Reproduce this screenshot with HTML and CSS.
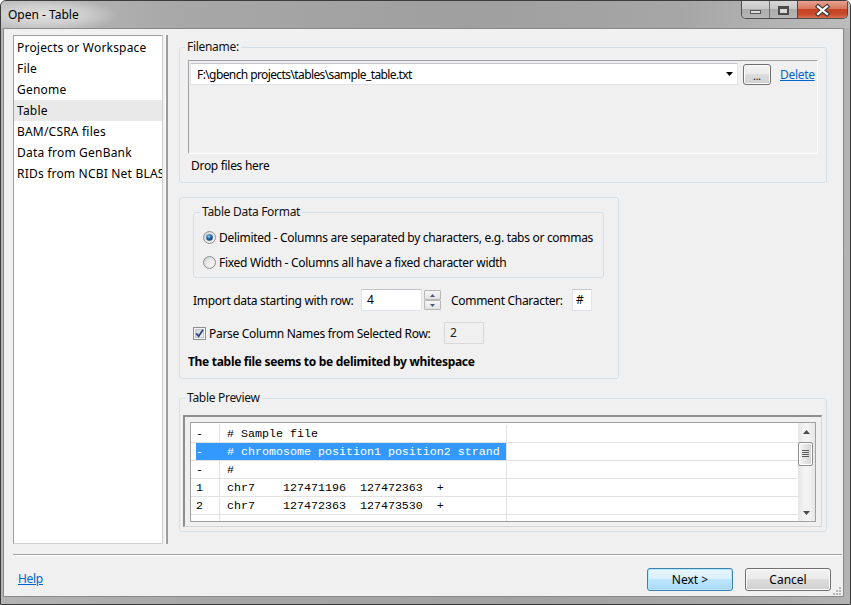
FILE: index.html
```html
<!DOCTYPE html>
<html>
<head>
<meta charset="utf-8">
<title>Open - Table</title>
<link rel="stylesheet" href="styles.css">
</head>
<body>
<div class="window">
  <div class="titlebar">
    <span class="title">Open - Table</span>
    <div class="caption">
      <div class="cap-btn cap-min">
        <svg width="27" height="19" viewBox="0 0 27 19"><rect x="8.5" y="10.5" width="10" height="3" fill="#dcdcdc" stroke="#555"/></svg>
      </div>
      <div class="cap-btn cap-max">
        <svg width="27" height="19" viewBox="0 0 27 19"><rect x="8" y="6" width="11" height="9" fill="#4a4a4a"/><rect x="10" y="9" width="7" height="4" fill="#d8d8d8"/></svg>
      </div>
      <div class="cap-btn cap-close">
        <svg width="49" height="19" viewBox="0 0 49 19"><path d="M20 6.5 L29 14 M29 6.5 L20 14" stroke="#3a3a3a" stroke-width="4.4" stroke-linecap="square" fill="none"/><path d="M20 6.5 L29 14 M29 6.5 L20 14" stroke="#fff" stroke-width="2.2" stroke-linecap="square" fill="none"/></svg>
      </div>
    </div>
  </div>
  <div class="client">
    <div class="main">
      <ul class="sources">
        <li>Projects or Workspace</li>
        <li>File</li>
        <li>Genome</li>
        <li class="selected">Table</li>
        <li>BAM/CSRA files</li>
        <li>Data from GenBank</li>
        <li>RIDs from NCBI Net BLAST</li>
      </ul>
      <div class="splitter"></div>
      <div class="content">
        <fieldset class="group group-file">
          <legend>Filename:</legend>
          <div class="drop-panel">
            <div class="file-row">
              <div class="combo">
                <span class="combo-text">F:\gbench projects\tables\sample_table.txt</span>
                <svg class="combo-arrow" width="7" height="4" viewBox="0 0 7 4"><polygon points="0,0 7,0 3.5,4" fill="#000"/></svg>
              </div>
              <button class="btn btn-browse">...</button>
              <a class="link delete-link" href="#">Delete</a>
            </div>
          </div>
          <div class="drop-hint">Drop files here</div>
        </fieldset>

        <fieldset class="group group-options">
          <fieldset class="group group-format">
            <legend>Table Data Format</legend>
            <label class="radio-row">
              <svg width="13" height="13" viewBox="0 0 13 13">
                <defs>
                  <linearGradient id="rg1" x1="0" y1="0" x2="1" y2="1"><stop offset="0" stop-color="#cfcfcf"/><stop offset="1" stop-color="#fdfdfd"/></linearGradient>
                  <radialGradient id="rd1" cx="0.4" cy="0.35" r="0.75"><stop offset="0" stop-color="#a9d8f8"/><stop offset="0.4" stop-color="#2a6fb8"/><stop offset="1" stop-color="#0c2c57"/></radialGradient>
                </defs>
                <circle cx="6.5" cy="6.5" r="6" fill="url(#rg1)" stroke="#8e8f8f"/>
                <circle cx="6.5" cy="6.5" r="3.3" fill="url(#rd1)"/>
              </svg>
              <span>Delimited - Columns are separated by characters, e.g. tabs or commas</span>
            </label>
            <label class="radio-row second">
              <svg width="13" height="13" viewBox="0 0 13 13">
                <defs>
                  <linearGradient id="rg2" x1="0" y1="0" x2="1" y2="1"><stop offset="0" stop-color="#cfcfcf"/><stop offset="1" stop-color="#fdfdfd"/></linearGradient>
                  <linearGradient id="rg3" x1="0" y1="0" x2="1" y2="1"><stop offset="0" stop-color="#e2e2e2"/><stop offset="1" stop-color="#f8f8f8"/></linearGradient>
                </defs>
                <circle cx="6.5" cy="6.5" r="6" fill="url(#rg2)" stroke="#8e8f8f"/>
                <circle cx="6.5" cy="6.5" r="3.6" fill="url(#rg3)"/>
              </svg>
              <span>Fixed Width - Columns all have a fixed character width</span>
            </label>
          </fieldset>

          <div class="field-row">
            <span class="field-label import-label">Import data starting with row:</span>
            <div class="textbox spin-box">4</div>
            <div class="spin">
              <div class="spin-btn"><svg width="5" height="3" viewBox="0 0 5 3"><polygon points="0,3 2.5,0 5,3" fill="#4b5a7a"/></svg></div>
              <div class="spin-btn"><svg width="5" height="3" viewBox="0 0 5 3"><polygon points="0,0 5,0 2.5,3" fill="#4b5a7a"/></svg></div>
            </div>
            <span class="field-label comment-label">Comment Character:</span>
            <div class="textbox char-box">#</div>
          </div>

          <div class="field-row">
            <label class="check-label">
              <svg width="13" height="13" viewBox="0 0 13 13">
                <defs>
                  <linearGradient id="cb1" x1="0" y1="0" x2="1" y2="1"><stop offset="0" stop-color="#cdd4df"/><stop offset="1" stop-color="#f6f8fa"/></linearGradient>
                </defs>
                <rect x="0.5" y="0.5" width="12" height="12" fill="#f4f4f4" stroke="#8e8f8f"/>
                <rect x="2.5" y="2.5" width="8" height="8" fill="url(#cb1)" stroke="#c2c7cf"/>
                <path d="M3.2 6.4 L5.6 9.2 L10 2.8" stroke="#2e4585" stroke-width="1.8" fill="none"/>
              </svg>
              <span>Parse Column Names from Selected Row:</span>
            </label>
            <div class="textbox disabled-box">2</div>
          </div>

          <div class="detect-msg">The table file seems to be delimited by whitespace</div>
        </fieldset>

        <fieldset class="group group-preview">
          <legend>Table Preview</legend>
          <div class="preview-frame">
            <div class="preview-list">
              <div class="grid">
                <div class="row"><div class="cell c1">-</div><div class="cell c2"># Sample file</div><div class="cell c3"></div></div>
                <div class="row selected"><div class="cell c1">-</div><div class="cell c2"># chromosome position1 position2 strand</div><div class="cell c3"></div></div>
                <div class="row"><div class="cell c1">-</div><div class="cell c2">#</div><div class="cell c3"></div></div>
                <div class="row"><div class="cell c1">1</div><div class="cell c2">chr7    127471196  127472363  +</div><div class="cell c3"></div></div>
                <div class="row"><div class="cell c1">2</div><div class="cell c2">chr7    127472363  127473530  +</div><div class="cell c3"></div></div>
                <div class="row"><div class="cell c1"></div><div class="cell c2"></div><div class="cell c3"></div></div>
              </div>
              <div class="vscroll">
                <div class="sb-btn"><svg width="7" height="4" viewBox="0 0 7 4"><polygon points="0,4 3.5,0 7,4" fill="#4a4a4a"/></svg></div>
                <div class="sb-track">
                  <div class="sb-thumb">
                    <svg width="7" height="8" viewBox="0 0 7 8"><rect x="0" y="0" width="7" height="1" fill="#5a5a5a"/><rect x="0" y="2" width="7" height="1" fill="#5a5a5a"/><rect x="0" y="4" width="7" height="1" fill="#5a5a5a"/><rect x="0" y="6" width="7" height="1" fill="#5a5a5a"/></svg>
                  </div>
                </div>
                <div class="sb-btn"><svg width="7" height="4" viewBox="0 0 7 4"><polygon points="0,0 7,0 3.5,4" fill="#4a4a4a"/></svg></div>
              </div>
            </div>
          </div>
        </fieldset>
      </div>
    </div>
    <div class="separator"></div>
    <div class="footer">
      <a class="link help-link" href="#">Help</a>
      <div class="buttons">
        <button class="btn btn-default">Next &gt;</button>
        <button class="btn">Cancel</button>
      </div>
    </div>
    <svg class="grip" width="8" height="8" viewBox="0 0 8 8">
      <rect x="6" y="0" width="2" height="2" fill="#b5b5b5"/>
      <rect x="3" y="3" width="2" height="2" fill="#b5b5b5"/>
      <rect x="6" y="3" width="2" height="2" fill="#b5b5b5"/>
      <rect x="0" y="6" width="2" height="2" fill="#b5b5b5"/>
      <rect x="3" y="6" width="2" height="2" fill="#b5b5b5"/>
      <rect x="6" y="6" width="2" height="2" fill="#b5b5b5"/>
    </svg>
  </div>
</div>
</body>
</html>
```

FILE: styles.css
```css
* {
  box-sizing: border-box;
}

html, body {
  margin: 0;
  padding: 0;
}

body {
  width: 851px;
  height: 605px;
  overflow: hidden;
  background: #ffffff;
  font-family: "Noto Sans", "Open Sans", sans-serif;
  font-size: 12px;
  letter-spacing: -0.3px;
  color: #000;
}

/* ---------- window frame ---------- */
.window {
  width: 851px;
  height: 605px;
  border: 1px solid #3c3c3c;
  border-radius: 6px 6px 0 0;
  background: linear-gradient(to right, #b4b4b4 0%, #a6a6a6 25%, #a1a1a1 60%, #a9a9a9 90%, #b4b4b4 100%);
  display: flex;
  flex-direction: column;
  overflow: hidden;
}

.titlebar {
  height: 27px;
  flex: none;
  display: flex;
  justify-content: space-between;
  align-items: flex-start;
  background:
    radial-gradient(ellipse 75px 17px at 44px 14px, rgba(226,226,226,0.95) 0%, rgba(226,226,226,0.55) 55%, rgba(226,226,226,0) 100%),
    linear-gradient(to right, #bababa 0%, #a7a7a7 22%, #9f9f9f 55%, #a6a6a6 80%, #bcbcbc 100%);
}

.title {
  padding-left: 7px;
  line-height: 28px;
  font-size: 12px;
  letter-spacing: 0;
  color: #000;
}

.caption {
  display: flex;
  height: 19px;
  margin-right: 2px;
  margin-top: -1px;
  border: 1px solid #4e4e4e;
  border-top: none;
  border-radius: 0 0 5px 5px;
  overflow: hidden;
}

.cap-btn {
  height: 19px;
  display: flex;
  align-items: center;
  justify-content: center;
}

.cap-btn svg {
  display: block;
}

.cap-min,
.cap-max {
  width: 27px;
  background: linear-gradient(#d8d8d8 0%, #c8c8c8 45%, #acacac 50%, #b8b8b8 100%);
}

.cap-max {
  width: 28px;
  border-left: 1px solid #6e6e6e;
}

.cap-close {
  width: 50px;
  border-left: 1px solid #6e3a30;
  background: linear-gradient(#e9a797 0%, #d9765f 45%, #c64424 50%, #c94a2b 75%, #dc7c5c 100%);
}

/* ---------- client area ---------- */
.client {
  flex: 1;
  margin: 0 6px 7px 2px;
  border: 1px solid #8a8a8a;
  background: #f0f0f0;
  display: flex;
  flex-direction: column;
  position: relative;
}

.main {
  height: 515px;
  flex: none;
  display: flex;
  padding: 6px 16px 0 9px;
}

.sources {
  width: 150px;
  height: 509px;
  flex: none;
  margin: 0;
  padding: 1px 0 0 0;
  list-style: none;
  background: #fff;
  border: 1px solid #a0a0a0;
  border-right-color: #d0d0d0;
  border-bottom-color: #d0d0d0;
  overflow: hidden;
  letter-spacing: 0.2px;
}

.sources li {
  height: 21px;
  line-height: 22px;
  padding-left: 3px;
  white-space: nowrap;
  overflow: hidden;
}

.sources li.selected {
  background: #e9e9e9;
}

.splitter {
  width: 3px;
  height: 509px;
  margin-left: 2px;
  flex: none;
  border-left: 1px solid #fff;
  border-right: 2px solid #9c9c9c;
}

.content {
  flex: 1;
  margin-left: 11px;
  padding-top: 4px;
  display: flex;
  flex-direction: column;
  align-items: stretch;
}

/* ---------- group boxes ---------- */
.group {
  margin: 0;
  min-width: 0;
  border: 1px solid #d5dfe5;
  border-radius: 3px;
}

.group > legend {
  padding: 0 2px;
  margin-left: -3px;
  line-height: 16px;
  color: #111;
}

.group-file {
  padding: 5px 8px 8px 8px;
}

.drop-panel {
  height: 94px;
  border-top: 1px solid #a0a0a0;
  border-left: 1px solid #a0a0a0;
  border-right: 1px solid #fff;
  border-bottom: 1px solid #fff;
  padding: 2px 0 0 1px;
}

.file-row {
  display: flex;
  align-items: center;
  height: 22px;
}

.combo {
  width: 548px;
  height: 22px;
  background: #fff;
  border: 1px solid #e2e3ea;
  border-top-color: #c4c6cc;
  display: flex;
  align-items: center;
  justify-content: space-between;
  padding: 0 4px 0 6px;
}

.combo-text {
  letter-spacing: -0.6px;
}

.combo-arrow {
  display: block;
}

.btn {
  font: inherit;
  color: #000;
  padding: 0;
  height: 23px;
  border: 1px solid #707070;
  border-radius: 3px;
  background: linear-gradient(#f2f2f2 0%, #ebebeb 45%, #dddddd 50%, #cfcfcf 100%);
  box-shadow: inset 0 0 0 1px #fbfbfb;
}

.btn-browse {
  width: 28px;
  height: 21px;
  margin-left: 5px;
  margin-top: 1px;
  font-size: 10px;
  line-height: 14px;
  padding-top: 2px;
}

.link {
  color: #0066cc;
  text-decoration: underline;
}

.delete-link {
  margin-left: 9px;
}

.drop-hint {
  margin-top: 4px;
  padding-left: 3px;
  line-height: 16px;
}

.group-options {
  width: 440px;
  margin-top: 14px;
  padding: 6px 13px 8px 13px;
}

.group-format {
  width: 411px;
  padding: 7px 8px 5px 9px;
}

.radio-row {
  display: flex;
  align-items: center;
  gap: 3px;
  height: 20px;
  white-space: nowrap;
}

.radio-row svg,
.check-label svg {
  display: block;
  flex: none;
}

.radio-row.second {
  margin-top: 5px;
}

.field-row {
  display: flex;
  align-items: center;
  height: 22px;
  margin-top: 11px;
}

.field-label {
  flex: none;
  white-space: nowrap;
}

.import-label {
  width: 168px;
}

.comment-label {
  width: 121px;
  margin-left: 10px;
}

.textbox {
  height: 22px;
  line-height: 20px;
  background: #fff;
  border: 1px solid #e2e3ea;
  border-top-color: #c4c6cc;
  flex: none;
}

.spin-box {
  width: 61px;
  padding-left: 5px;
}

.spin {
  width: 17px;
  height: 22px;
  margin-left: 2px;
  display: flex;
  flex-direction: column;
  justify-content: space-between;
  padding: 1px 0;
}

.spin-btn {
  height: 10px;
  border: 1px solid #b8b8b8;
  border-radius: 1px;
  background: linear-gradient(#f6f6f6, #e2e2e2);
  display: flex;
  align-items: center;
  justify-content: center;
}

.spin-btn svg {
  display: block;
}

.char-box {
  width: 20px;
  padding-left: 3px;
}

.check-label {
  width: 251px;
  display: flex;
  align-items: center;
  gap: 3px;
  white-space: nowrap;
}

.disabled-box {
  width: 40px;
  padding-left: 5px;
  background: #f0f0f0;
  border: 1px solid #d9d9d9;
  color: #222;
}

.detect-msg {
  font-weight: bold;
  margin: 10px 0 0 -5px;
  line-height: 16px;
  white-space: nowrap;
}

.group-preview {
  margin-top: 11px;
  padding: 9px 4px 4px 3px;
}

.group-preview > legend {
  margin-left: 2px;
}

.preview-frame {
  height: 112px;
  border-top: 2px solid #8e8e8e;
  border-left: 2px solid #8e8e8e;
  border-right: 1px solid #d6d6d6;
  border-bottom: 1px solid #d6d6d6;
  padding: 5px 5px 4px 5px;
}

.preview-list {
  height: 100px;
  border: 1px solid #a0a0a0;
  background: #fff;
  display: flex;
  overflow: hidden;
}

.grid {
  flex: 1;
  padding-top: 2px;
  overflow: hidden;
  font-family: "Liberation Mono", "Courier New", monospace;
  font-size: 11.67px;
  letter-spacing: 0;
}

.row {
  display: grid;
  grid-template-columns: 29px 287px 1fr;
  height: 18px;
  border-bottom: 1px solid #e2e2e2;
}

.cell {
  line-height: 19px;
  white-space: pre;
  overflow: hidden;
  border-right: 1px solid #e2e2e2;
}

.c1 {
  padding-left: 5px;
}

.c2 {
  padding-left: 7px;
}

.c3 {
  border-right: none;
}

.row.selected {
  background: linear-gradient(to right, transparent 5px, #3399ff 5px, #3399ff 315px, transparent 315px);
  color: #fff;
}

.row.selected .c1 {
  border-right-color: #3399ff;
}

.vscroll {
  width: 17px;
  flex: none;
  display: flex;
  flex-direction: column;
  background: linear-gradient(to right, #e6e6e6, #f3f3f3 40%, #f3f3f3 60%, #e6e6e6);
}

.sb-btn {
  height: 17px;
  flex: none;
  display: flex;
  align-items: center;
  justify-content: center;
}

.sb-btn svg,
.sb-thumb svg {
  display: block;
}

.sb-track {
  flex: 1;
}

.sb-thumb {
  height: 24px;
  margin: 2px 2px 0 0;
  border: 1px solid #8f8f8f;
  border-radius: 2px;
  background: linear-gradient(to right, #f6f6f6, #e4e4e4 50%, #d4d4d4);
  box-shadow: inset 0 0 0 1px #fdfdfd;
  display: flex;
  align-items: center;
  justify-content: center;
}

/* ---------- footer ---------- */
.separator {
  height: 2px;
  flex: none;
  margin: 10px 1px 0 9px;
  border-top: 1px solid #a0a0a0;
  border-bottom: 1px solid #ffffff;
}

.footer {
  flex: 1;
  display: flex;
  align-items: flex-start;
  justify-content: space-between;
  padding: 12px 12px 0 14px;
}

.help-link {
  line-height: 16px;
  margin-top: 3px;
}

.buttons {
  display: flex;
  gap: 12px;
}

.buttons .btn {
  width: 86px;
}

.btn-default {
  border-color: #3c7fb1;
  background: linear-gradient(#eaf6fd 0%, #d9f0fc 45%, #bee6fd 50%, #a7d9f5 100%);
  box-shadow: inset 0 0 0 1px #b6e8fb;
}

.grip {
  position: absolute;
  right: 2px;
  bottom: 1px;
  display: block;
}
```
